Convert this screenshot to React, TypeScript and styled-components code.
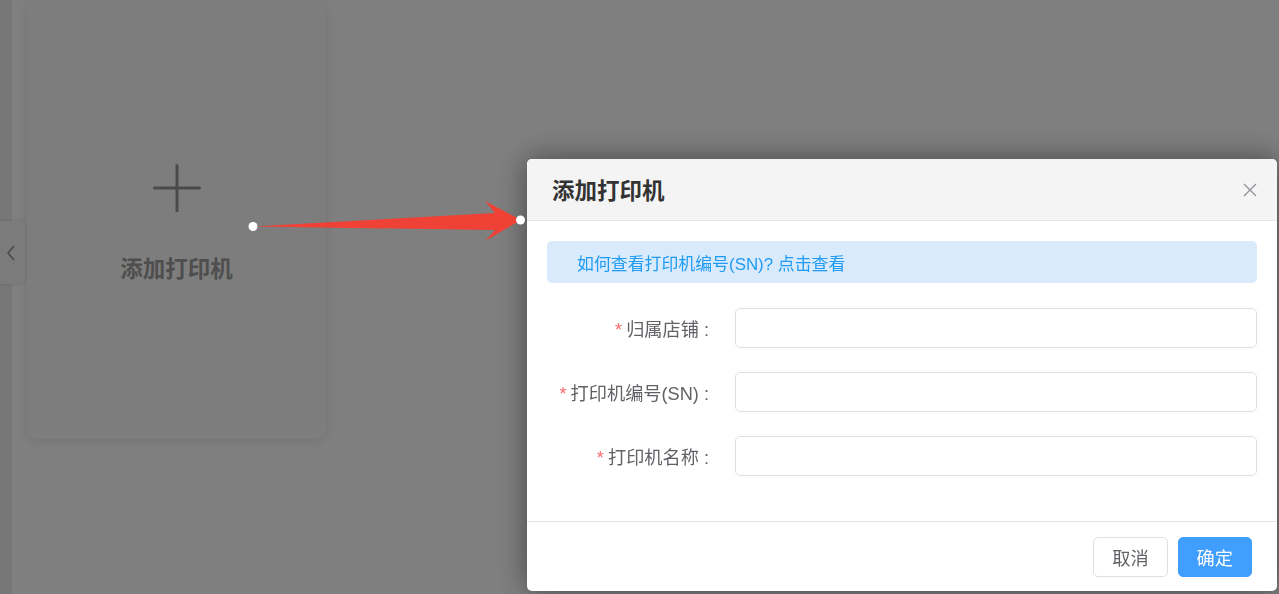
import styled, { createGlobalStyle } from 'styled-components';

const GlobalStyle = createGlobalStyle`
  html, body {
    margin: 0;
    padding: 0;
    background: #ffffff;
    font-family: "Liberation Sans", "Noto Sans CJK SC", sans-serif;
    overflow: hidden;
  }
  * { box-sizing: border-box; }
`;

const Page = styled.div`
  display: flex;
  width: 1279px;
  height: 594px;
  background: #ffffff;
`;

const SideStrip = styled.div`
  width: 12px;
  flex-shrink: 0;
  background: #eeeeee;
`;

const Main = styled.main`
  flex: 1;
  padding: 2px 0 0 15px;
`;

const CollapseTab = styled.div`
  position: absolute;
  left: 0;
  top: 221px;
  width: 25px;
  height: 63px;
  background: #f7f7f7;
  border-radius: 0 6px 6px 0;
  box-shadow: 0 0 4px rgba(0, 0, 0, 0.12);
  display: flex;
  align-items: center;
  justify-content: center;

  svg {
    width: 10px;
    height: 16px;
    margin-left: -4px;
    color: #8a8a8a;
  }
`;

const AddCard = styled.div`
  width: 299px;
  height: 437px;
  background: #fbfbfb;
  border-radius: 10px;
  box-shadow: 0 2px 12px rgba(0, 0, 0, 0.1);
  display: flex;
  flex-direction: column;
  align-items: center;
  justify-content: center;
  padding-top: 6px;

  svg {
    width: 48px;
    height: 48px;
    margin-bottom: 39px;
    color: #959595;
  }
`;

const AddLabel = styled.div`
  font-family: "Noto Sans CJK SC", sans-serif;
  font-size: 22.5px;
  font-weight: 700;
  line-height: 32px;
  color: #9c9c9c;
`;

const Mask = styled.div`
  position: fixed;
  inset: 0;
  background: rgba(0, 0, 0, 0.5);
`;

const Dialog = styled.div`
  position: fixed;
  left: 527px;
  top: 159px;
  width: 750px;
  background: #ffffff;
  border-radius: 5px;
  box-shadow: 0 0 30px rgba(0, 0, 0, 0.45);
  overflow: hidden;
`;

const DialogHeader = styled.header`
  height: 62px;
  padding: 0 20px 0 25px;
  background: #f4f4f4;
  border-bottom: 1px solid #e4e4e4;
  display: flex;
  align-items: center;
  justify-content: space-between;
`;

const DialogTitle = styled.h2`
  margin: 0;
  font-family: "Noto Sans CJK SC", sans-serif;
  font-size: 22.5px;
  font-weight: 700;
  color: #333333;
  line-height: 1;
`;

const CloseButton = styled.button`
  width: 14px;
  height: 14px;
  padding: 0;
  border: none;
  background: none;
  cursor: pointer;
  color: #909399;
  display: flex;

  svg {
    width: 14px;
    height: 14px;
  }
`;

const DialogBody = styled.div`
  padding: 20px 20px 45px;
`;

const Tip = styled.div`
  height: 42px;
  padding: 0 30px;
  margin-bottom: 25px;
  background: #d8eafc;
  border-radius: 5px;
  display: flex;
  align-items: center;
  font-size: 16.9px;
  color: #1f9bf2;
  cursor: pointer;
`;

const FormList = styled.div`
  display: flex;
  flex-direction: column;
  gap: 24px;
`;

const FormRow = styled.div`
  display: flex;
  align-items: center;
`;

const FieldLabel = styled.label`
  width: 188px;
  padding-right: 26px;
  text-align: right;
  font-size: 18.2px;
  color: #606266;
  white-space: nowrap;

  &::before {
    content: '*';
    color: #f56c6c;
    margin-right: 4px;
  }
`;

const TextInput = styled.input`
  flex: 1;
  height: 40px;
  padding: 0 15px;
  border: 1px solid #dcdfe6;
  border-radius: 5px;
  font-size: 17.5px;
  color: #606266;
  outline: none;
`;

const DialogFooter = styled.footer`
  border-top: 1px solid #e4e4e4;
  padding: 15px 25px 14px;
  display: flex;
  justify-content: flex-end;
  gap: 10px;
`;

const Button = styled.button<{ $primary?: boolean }>`
  height: 40px;
  padding: 0 18px;
  border-radius: 5px;
  font-family: "Noto Sans CJK SC", sans-serif;
  font-size: 18.2px;
  line-height: 1;
  cursor: pointer;
  border: 1px solid ${({ $primary }) => ($primary ? '#409eff' : '#dcdfe6')};
  background: ${({ $primary }) => ($primary ? '#409eff' : '#ffffff')};
  color: ${({ $primary }) => ($primary ? '#ffffff' : '#606266')};
`;

const Annotation = styled.svg`
  position: fixed;
  left: 0;
  top: 0;
  width: 1279px;
  height: 594px;
  pointer-events: none;
`;

const fields = ['归属店铺', '打印机编号(SN)', '打印机名称'];

export default function App() {
  return (
    <>
      <GlobalStyle />
      <Page>
        <SideStrip />
        <Main>
          <AddCard>
            <svg viewBox="0 0 48 48" fill="none" stroke="currentColor" strokeWidth={3} strokeLinecap="round">
              <path d="M24 1.5v45M1.5 24h45" />
            </svg>
            <AddLabel>添加打印机</AddLabel>
          </AddCard>
        </Main>
      </Page>
      <CollapseTab>
        <svg viewBox="0 0 10 16" fill="none" stroke="currentColor" strokeWidth={1.4}>
          <path d="M8 1L2 8l6 7" />
        </svg>
      </CollapseTab>
      <Mask />
      <Dialog>
        <DialogHeader>
          <DialogTitle>添加打印机</DialogTitle>
          <CloseButton aria-label="关闭">
            <svg viewBox="0 0 14 14" fill="none" stroke="currentColor" strokeWidth={1.3}>
              <path d="M1 1l12 12M13 1L1 13" />
            </svg>
          </CloseButton>
        </DialogHeader>
        <DialogBody>
          <Tip>如何查看打印机编号(SN)? 点击查看</Tip>
          <FormList>
            {fields.map((f) => (
              <FormRow key={f}>
                <FieldLabel>{f} :</FieldLabel>
                <TextInput />
              </FormRow>
            ))}
          </FormList>
        </DialogBody>
        <DialogFooter>
          <Button>取消</Button>
          <Button $primary>确定</Button>
        </DialogFooter>
      </Dialog>
      <Annotation viewBox="0 0 1279 594">
        <path
          d="M253 226.5 L495 213 Q490 207 485 201 L521 220 L485 241 Q491 235 495 230 Z"
          fill="#ef4136"
        />
        <circle cx={253} cy={226.5} r={4.5} fill="#ffffff" />
        <circle cx={520.5} cy={220} r={4.5} fill="#ffffff" />
      </Annotation>
    </>
  );
}
